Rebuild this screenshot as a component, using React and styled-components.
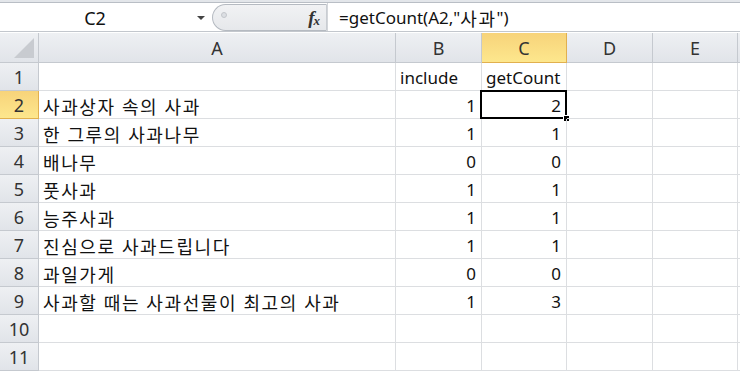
import React from "react";
import styled, { createGlobalStyle, css } from "styled-components";

const GlobalStyle = createGlobalStyle`
  html, body {
    margin: 0;
    padding: 0;
    background: #ffffff;
    overflow: hidden;
  }
  body {
    font-family: "Noto Sans", "Noto Sans CJK KR", sans-serif;
  }
`;

const COLS = [
  { key: "A", width: 357 },
  { key: "B", width: 86 },
  { key: "C", width: 85 },
  { key: "D", width: 86 },
  { key: "E", width: 85 },
];

const ROWS = [
  ["", "include", "getCount"],
  ["사과상자 속의 사과", 1, 2],
  ["한 그루의 사과나무", 1, 1],
  ["배나무", 0, 0],
  ["풋사과", 1, 1],
  ["능주사과", 1, 1],
  ["진심으로 사과드립니다", 1, 1],
  ["과일가게", 0, 0],
  ["사과할 때는 사과선물이 최고의 사과", 1, 3],
  ["", "", ""],
  ["", "", ""],
];

const ACTIVE_ROW = 2;
const ACTIVE_COL = "C";
const HANGUL = /[가-힣]/;

export default function App() {
  return (
    <>
      <GlobalStyle />
      <Window>
        <TopStrip />
        <FormulaBar>
          <NameBox>
            <NameText>C2</NameText>
            <DropArrow />
          </NameBox>
          <FxPill>
            <PillDot />
            <FxMark>
              f<sub>x</sub>
            </FxMark>
          </FxPill>
          <FormulaInput>
            =getCount(A2,"<Ko>사과</Ko>")
          </FormulaInput>
        </FormulaBar>
        <Sheet>
          <Corner>
            <CornerTriangle />
          </Corner>
          {COLS.map((c) => (
            <ColHeader key={c.key} $active={c.key === ACTIVE_COL}>
              {c.key}
            </ColHeader>
          ))}
          <ColHeader />
          {ROWS.map((row, i) => {
            const n = i + 1;
            return (
              <React.Fragment key={n}>
                <RowHeader $active={n === ACTIVE_ROW}>{n}</RowHeader>
                {COLS.map((c, ci) => {
                  const v = row[ci] ?? "";
                  const isNum = typeof v === "number";
                  return (
                    <Cell
                      key={c.key}
                      $num={isNum}
                      $ko={typeof v === "string" && HANGUL.test(v)}
                      $selected={n === ACTIVE_ROW && c.key === ACTIVE_COL}
                    >
                      {v}
                    </Cell>
                  );
                })}
                <Cell />
              </React.Fragment>
            );
          })}
        </Sheet>
      </Window>
    </>
  );
}

const Window = styled.div`
  width: 740px;
  height: 373px;
  overflow: hidden;
  background: #ffffff;
  display: flex;
  flex-direction: column;
`;

const TopStrip = styled.div`
  height: 2px;
  background: #e3e6ea;
  border-bottom: 1px solid #b9bec5;
`;

const FormulaBar = styled.div`
  height: 28px;
  display: flex;
  align-items: stretch;
  background: #ffffff;
  border-bottom: 1px solid #c3c7cd;
  box-sizing: content-box;
`;

const NameBox = styled.div`
  width: 212px;
  display: flex;
  align-items: center;
`;

const NameText = styled.div`
  width: 190px;
  text-align: center;
  font-size: 18px;
  color: #111;
  padding-top: 1px;
`;

const DropArrow = styled.div`
  width: 0;
  height: 0;
  border-left: 4px solid transparent;
  border-right: 4px solid transparent;
  border-top: 4px solid #444;
  margin-left: 7px;
  margin-top: 2px;
`;

const FxPill = styled.div`
  width: 115px;
  margin-top: 1px;
  border: 1px solid #b5bac1;
  border-right-color: #c9cdd2;
  border-radius: 15px 0 0 15px;
  background: linear-gradient(180deg, #f1f2f4 0%, #e6e8eb 100%);
  display: flex;
  align-items: center;
  justify-content: space-between;
  padding: 0 7px 0 8px;
  box-sizing: border-box;
`;

const PillDot = styled.div`
  width: 4px;
  height: 4px;
  border-radius: 50%;
  border: 1px solid #c3c6cb;
  background: #dcdfe3;
  margin-top: -5px;
`;

const FxMark = styled.div`
  font-family: "Liberation Serif", serif;
  font-style: italic;
  font-weight: bold;
  font-size: 19px;
  letter-spacing: -1px;
  color: #333;
  sub {
    font-size: 13px;
    vertical-align: -1px;
  }
`;

const FormulaInput = styled.div`
  flex: 1;
  display: flex;
  align-items: center;
  padding-left: 11px;
  font-size: 17px;
  color: #111;
  border-left: 1px solid #d3d6da;
  padding-top: 1px;
  white-space: pre;
`;

const Ko = styled.span`
  font-size: 18px;
  letter-spacing: 1.6px;
`;

const Sheet = styled.div`
  display: grid;
  grid-template-columns: 39px ${COLS.map((c) => c.width + "px").join(" ")} 20px;
  grid-template-rows: 30px;
  grid-auto-rows: 28px;
  margin-top: 1px;
`;

const headerBase = css`
  box-sizing: border-box;
  background: linear-gradient(180deg, #eef0f3 0%, #e1e4e9 100%);
  border-right: 1px solid #c5c9cf;
  border-bottom: 1px solid #c5c9cf;
  color: #333;
  display: flex;
  align-items: center;
  justify-content: center;
  font-size: 18px;
`;

const activeHeader = css`
  background: linear-gradient(180deg, #f7d37a 0%, #fde78d 100%);
  border-right-color: #e1b04f;
  border-bottom-color: #e1b04f;
  color: #333;
`;

const Corner = styled.div`
  ${headerBase};
  position: relative;
`;

const CornerTriangle = styled.div`
  position: absolute;
  right: 4px;
  bottom: 4px;
  width: 0;
  height: 0;
  border-left: 20px solid transparent;
  border-bottom: 20px solid #c8cbd0;
`;

const ColHeader = styled.div`
  ${headerBase};
  padding-top: 1px;
  ${(p) => p.$active && activeHeader};
`;

const RowHeader = styled.div`
  ${headerBase};
  padding-top: 1px;
  ${(p) => p.$active && activeHeader};
`;

const Cell = styled.div`
  box-sizing: border-box;
  position: relative;
  border-right: 1px solid #dcdee1;
  border-bottom: 1px solid #dcdee1;
  font-size: ${(p) => (p.$ko ? "18px" : "17px")};
  letter-spacing: ${(p) => (p.$ko ? "1.6px" : "0")};
  color: #111;
  display: flex;
  align-items: center;
  justify-content: ${(p) => (p.$num ? "flex-end" : "flex-start")};
  padding: 2px 5px 0 4px;
  white-space: pre;
  overflow: visible;
  ${(p) =>
    p.$selected &&
    css`
      &::before {
        content: "";
        position: absolute;
        left: -2px;
        top: -1px;
        right: -1px;
        bottom: -1px;
        border: 2px solid #000;
        pointer-events: none;
      }
      &::after {
        content: "";
        position: absolute;
        right: -4px;
        bottom: -4px;
        width: 5px;
        height: 5px;
        background: #000;
        border: 1px solid #fff;
      }
    `};
`;
